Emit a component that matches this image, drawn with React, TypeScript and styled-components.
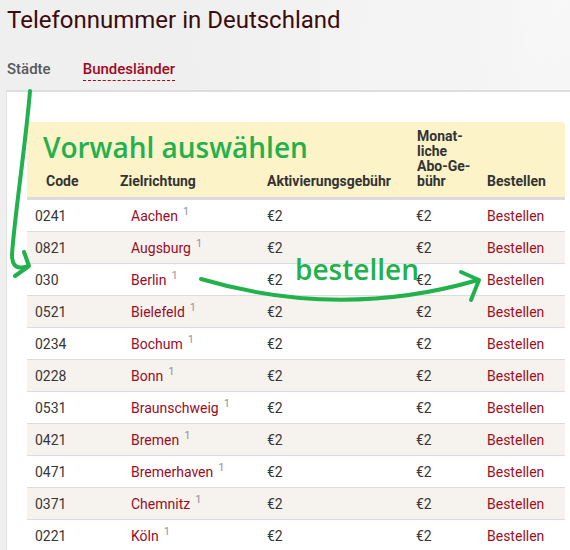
import React from 'react';
import styled, { createGlobalStyle } from 'styled-components';

const GlobalStyle = createGlobalStyle`
  html, body {
    margin: 0;
    padding: 0;
    background: #efefef;
    overflow: hidden;
  }
  body {
    font-family: Roboto, "Liberation Sans", Arial, sans-serif;
  }
`;

type Row = { code: string; city: string };

const rows: Row[] = [
  { code: '0241', city: 'Aachen' },
  { code: '0821', city: 'Augsburg' },
  { code: '030', city: 'Berlin' },
  { code: '0521', city: 'Bielefeld' },
  { code: '0234', city: 'Bochum' },
  { code: '0228', city: 'Bonn' },
  { code: '0531', city: 'Braunschweig' },
  { code: '0421', city: 'Bremen' },
  { code: '0471', city: 'Bremerhaven' },
  { code: '0371', city: 'Chemnitz' },
  { code: '0221', city: 'Köln' },
];

export default function App() {
  return (
    <Page>
      <GlobalStyle />
      <Title>Telefonnummer in Deutschland</Title>
      <Tabs>
        <Tab>Städte</Tab>
        <Tab active>Bundesländer</Tab>
      </Tabs>
      <Card>
        <Table>
          <colgroup>
            <col style={{ width: 85 }} />
            <col style={{ width: 147 }} />
            <col style={{ width: 149 }} />
            <col style={{ width: 72 }} />
            <col style={{ width: 85 }} />
          </colgroup>
          <thead>
            <tr>
              <Th pad={19}>Code</Th>
              <Th pad={8}>Zielrichtung</Th>
              <Th pad={8}>Aktivierungsgebühr</Th>
              <Th pad={9}>
                Monat-
                <br />
                liche
                <br />
                Abo-Ge-
                <br />
                bühr
              </Th>
              <Th pad={7} last>
                Bestellen
              </Th>
            </tr>
          </thead>
          <tbody>
            {rows.map((r) => (
              <Tr key={r.code}>
                <Td pad={8}>{r.code}</Td>
                <Td pad={19}>
                  <City>{r.city}</City>
                  <Note>1</Note>
                </Td>
                <Td pad={8}>€2</Td>
                <Td pad={8}>€2</Td>
                <Td pad={7}>
                  <OrderLink>Bestellen</OrderLink>
                </Td>
              </Tr>
            ))}
          </tbody>
        </Table>
      </Card>

      <Scribble viewBox="0 0 570 550" width="570" height="550">
        <g fill="none" stroke="#22b14c" strokeWidth="4" strokeLinecap="round" strokeLinejoin="round">
          <path d="M30 91 C25 150 14 220 12 255 Q12 272 28 266" />
          <path d="M24 252 L29 266 L15 276" />
          <path d="M201 279 Q340 320 478 280" />
          <path d="M461 272 L479 280 L471 300" />
        </g>
      </Scribble>
      <Remark top={133} left={43}>
        Vorwahl auswählen
      </Remark>
      <Remark top={255} left={295}>
        bestellen
      </Remark>
    </Page>
  );
}

const Page = styled.div`
  position: relative;
  width: 570px;
  height: 550px;
  overflow: hidden;
  padding-top: 6px;
  box-sizing: border-box;
  background:
    radial-gradient(60% 120% at 72% 10%, rgba(255, 255, 255, 0.35), rgba(255, 255, 255, 0) 70%),
    radial-gradient(30% 90% at 98% 0%, rgba(255, 255, 255, 0.5), rgba(255, 255, 255, 0) 70%),
    #efefef;
`;

const Title = styled.h1`
  margin: 0 0 0 7px;
  font-size: 24px;
  line-height: 28px;
  font-weight: 400;
  color: #3c0b0b;
`;

const Tabs = styled.nav`
  display: flex;
  gap: 32px;
  margin: 25px 0 0 7px;
`;

const Tab = styled.span<{ active?: boolean }>`
  font-size: 15px;
  line-height: 20px;
  font-weight: 500;
  color: ${(p) => (p.active ? '#a0081e' : '#585858')};
  padding-bottom: 1px;
  border-bottom: 1px dashed ${(p) => (p.active ? '#a0081e' : 'transparent')};
`;

const Card = styled.section`
  margin: 9px -5px 0 6px;
  background: #ffffff;
  border-top: 2px solid #dedede;
  border-left: 1px solid #e2e2e2;
  padding: 30px 10px 0 20px;
  height: 600px;
`;

const Table = styled.table`
  width: 538px;
  table-layout: fixed;
  border-collapse: separate;
  border-spacing: 0;
  font-size: 14px;
  color: #363636;
`;

const Th = styled.th<{ pad: number; last?: boolean }>`
  text-align: left;
  vertical-align: bottom;
  font-size: 14px;
  line-height: 15px;
  font-weight: 700;
  color: #333333;
  background: #fdf3c9;
  padding: 7px 0 8px ${(p) => p.pad}px;
  border-bottom: 3px solid #dcdcdc;
  border-top-right-radius: ${(p) => (p.last ? '4px' : '0')};
`;

const Tr = styled.tr`
  &:nth-child(even) td {
    background: #f6f3ee;
  }
`;

const Td = styled.td<{ pad: number }>`
  height: 31px;
  padding: 0 0 0 ${(p) => p.pad}px;
  border-bottom: 1px solid #dddddd;
  background: #ffffff;
  white-space: nowrap;
`;

const City = styled.span`
  color: #9c0b24;
`;

const Note = styled.span`
  display: inline-block;
  margin-left: 5px;
  font-size: 11px;
  color: #8b96a3;
  position: relative;
  top: -6px;
`;

const OrderLink = styled.span`
  color: #a00d20;
`;

const Scribble = styled.svg`
  position: absolute;
  left: 0;
  top: 0;
  pointer-events: none;
`;

const Remark = styled.div<{ top: number; left: number }>`
  position: absolute;
  top: ${(p) => p.top}px;
  left: ${(p) => p.left}px;
  font-family: "Open Sans", "DejaVu Sans", sans-serif;
  font-size: 28px;
  line-height: 28px;
  font-weight: 600;
  color: #22b14c;
  white-space: nowrap;
`;
